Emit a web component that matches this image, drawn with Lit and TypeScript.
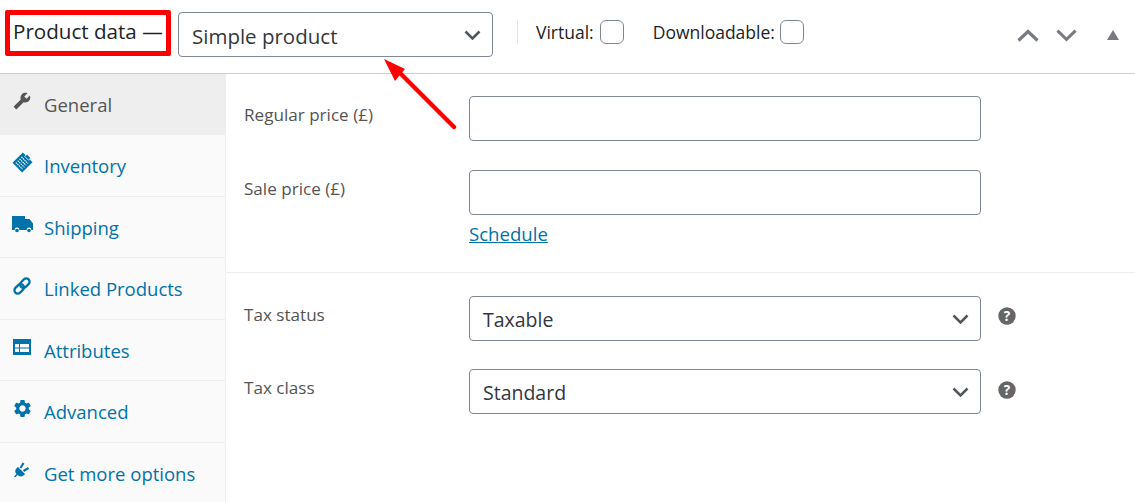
import { LitElement, html, css, svg } from "lit";
import { customElement } from "lit/decorators.js";

const icons: Record<string, unknown> = {
  wrench: svg`<svg class="ic" style="width:18px;height:18px" viewBox="0 0 24 24"><path transform="translate(24,0) scale(-1,1)" fill="currentColor" d="M22.7 19l-9.1-9.1c.9-2.3.4-5-1.5-6.9-2-2-5-2.4-7.4-1.3L9 6 6 9 1.6 4.7C.4 7.1.9 10.1 2.9 12.1c1.9 1.9 4.6 2.4 6.9 1.5l9.1 9.1c.4.4 1 .4 1.4 0l2.300-2.300c.5-.4.5-1.100.1-1.400z"/></svg>`,
  inventory: svg`<svg class="ic" style="width:21px;height:21px" viewBox="0 0 20 20"><g transform="rotate(45 10 10)"><rect x="3.500" y="3" width="13" height="14" fill="currentColor"/><path d="M5.500 7h9M5.500 9.500h9M5.500 12h9M5.500 14.500h9" stroke="#fff" stroke-width="1" stroke-dasharray="1.500 .6"/><rect x="7.500" y="1.400" width="5" height="3" fill="currentColor" stroke="#fff" stroke-width=".7"/></g></svg>`,
  truck: svg`<svg class="ic" style="width:21px;height:17px" viewBox="0 0 21 17"><path fill="currentColor" d="M0 0h13v3h4.500L21 7.500V14h-1.600a2.400 2.400 0 0 0-4.800 0H7.400a2.400 2.400 0 0 0-4.800 0H0z"/><circle cx="5" cy="14.500" r="1.800" fill="currentColor"/><circle cx="17" cy="14.500" r="1.800" fill="currentColor"/></svg>`,
  link: svg`<svg class="ic" style="width:20px;height:20px" viewBox="0 0 18 18"><g fill="none" stroke="currentColor" stroke-width="2.100" transform="rotate(-45 9 9)"><rect x="0.600" y="6" width="9.600" height="6" rx="3"/><rect x="7.800" y="6" width="9.600" height="6" rx="3"/></g></svg>`,
  attributes: svg`<svg class="ic" style="width:18px;height:16px" viewBox="0 0 18 16"><path fill="currentColor" fill-rule="evenodd" d="M0 0h18v16H0zM2 5v8h14V5z"/><path fill="currentColor" d="M2 8.500h14v1H2zM6 5h1v8H6z"/></svg>`,
  gear: svg`<svg class="ic" style="width:21px;height:21px" viewBox="0 0 24 24"><path fill="currentColor" d="M19.14 12.94c.04-.3.06-.61.06-.94 0-.32-.02-.64-.07-.94l2.03-1.58c.18-.14.23-.41.12-.61l-1.92-3.32c-.12-.22-.37-.29-.59-.22l-2.39.96c-.5-.38-1.03-.7-1.62-.94l-.36-2.54c-.04-.24-.24-.41-.48-.41h-3.84c-.24 0-.43.17-.47.41l-.36 2.54c-.59.24-1.13.57-1.62.94l-2.39-.96c-.22-.08-.47 0-.59.22L2.74 8.87c-.12.21-.08.47.12.61l2.03 1.58c-.05.3-.09.63-.09.94s.02.64.07.94l-2.03 1.58c-.18.14-.23.41-.12.61l1.92 3.32c.12.22.37.29.59.22l2.39-.96c.5.38 1.03.7 1.62.94l.36 2.54c.05.24.24.41.48.41h3.84c.24 0 .44-.17.47-.41l.36-2.54c.59-.24 1.13-.56 1.62-.94l2.39.96c.22.08.47 0 .59-.22l1.92-3.32c.12-.22.07-.47-.12-.61l-2.01-1.58zM12 15.600c-1.980 0-3.600-1.620-3.600-3.600s1.620-3.600 3.600-3.600 3.600 1.620 3.600 3.600-1.620 3.600-3.600 3.600z"/></svg>`,
  plug: svg`<svg class="ic plug" style="width:16px;height:16px" viewBox="0 0 16 16"><path fill="currentColor" d="M4 5l7 7C9 15 5.500 15 3.500 13L1 15.500 0 14.500 2.500 12C.5 10 1 7 4 5z"/><path stroke="currentColor" stroke-width="2.200" d="M6.500 6l3-5M9.500 9l5-3"/></svg>`,
};

const tabs = [
  ["General", "wrench"],
  ["Inventory", "inventory"],
  ["Shipping", "truck"],
  ["Linked Products", "link"],
  ["Attributes", "attributes"],
  ["Advanced", "gear"],
  ["Get more options", "plug"],
];

const chevron = svg`<svg class="chev" viewBox="0 0 17 10"><path d="M1.500 1.500l7 7 7-7" fill="none" stroke="#50575e" stroke-width="2.500"/></svg>`;
const help = (cls = "") => svg`<svg class="help ${cls}" viewBox="0 0 18 18"><circle cx="9" cy="9" r="8.700" fill="#666"/><text x="9" y="14" text-anchor="middle" fill="#fff">?</text></svg>`;

@customElement("app-root")
export class AppRoot extends LitElement {
  static styles = css`
    :host {
      display: block;
      height: 502px;
      overflow: hidden;
      position: relative;
      background: #fff;
      font-family: "Open Sans", "Noto Sans", sans-serif;
      color: #1d2327;
    }
    .head {
      height: 73px;
      border-bottom: 1px solid #ccc;
      display: flex;
      align-items: flex-start;
      padding-left: 5px;
    }
    .title {
      margin-top: 10px;
      width: 166px;
      height: 46px;
      flex: none;
      box-sizing: border-box;
      border: 5px solid #f00;
      border-radius: 2px;
      padding: 2px 0 0 3px;
      font-size: 20.600px;
      line-height: 28px;
      white-space: nowrap;
      overflow: hidden;
    }
    .select {
      box-sizing: border-box;
      border: 1px solid #7e8993;
      border-radius: 4px;
      display: flex;
      align-items: center;
      justify-content: space-between;
      height: 45px;
      padding: 0 11px 0 13px;
      color: #32373c;
      font-size: 19.500px;
      background: #fff;
    }
    .select span { padding-top: 1px; }
    .head .select {
      margin: 12px 0 0 7px;
      width: 315px;
      font-size: 20.500px;
    }
    .head .select span { padding-top: 2px; }
    .chev { width: 17px; height: 10px; }
    .sep {
      width: 1px;
      height: 24px;
      background: #e5e5e5;
      margin: 20px 18px 0 24px;
    }
    .check {
      display: flex;
      align-items: center;
      height: 24px;
      margin-top: 20px;
      font-size: 17.500px;
      white-space: nowrap;
      gap: 5px;
    }
    .check + .check { margin-left: 29px; }
    .box {
      width: 24px;
      height: 24px;
      box-sizing: border-box;
      border: 1px solid #7e8993;
      border-radius: 6px;
      background: #fff;
    }
    .box.first { margin-left: 1px; }
    .sort {
      margin-left: auto;
      margin-top: 29px;
      display: flex;
      align-items: center;
      padding-right: 16px;
    }
    .sort svg { display: block; }
    .up { width: 22px; height: 13px; }
    .down { width: 21px; height: 13px; margin-left: 17px; }
    .tri { width: 12px; height: 10px; margin-left: 30px; margin-top: -2px; }
    .body { display: flex; height: 428px; }
    .side {
      width: 225px;
      flex: none;
      background: #fafafa;
      border-right: 1px solid #eee;
    }
    .tab {
      height: 62px;
      box-sizing: border-box;
      border-bottom: 1px solid #eee;
      display: flex;
      align-items: center;
      color: #0073aa;
      font-size: 18.500px;
      white-space: nowrap;
    }
    .tab:nth-child(odd) { height: 61px; }
    .tab.active {
      background: #eee;
      color: #555;
    }
    .tabicon {
      width: 44px;
      flex: none;
      display: flex;
      justify-content: center;
      padding: 0 1px;
      box-sizing: border-box;
      margin-top: -6px;
    }
    .ic { display: block; }
    .main { flex: 1; min-width: 0; color: #555d66; }
    .group {
      display: grid;
      grid-template-columns: 225px 512px auto;
      justify-content: start;
      row-gap: 29px;
      padding: 22px 0 25px 18px;
    }
    .group + .group {
      border-top: 1px solid #eee;
      padding-top: 23px;
      row-gap: 28px;
    }
    .label {
      font-size: 17.100px;
      line-height: 26px;
      padding-top: 6px;
      color: #555;
    }
    .input {
      height: 45px;
      box-sizing: border-box;
      border: 1px solid #7e8993;
      border-radius: 4px;
      background: #fff;
    }
    .field a {
      display: block;
      color: #0073aa;
      font-size: 18.600px;
      line-height: 26px;
      margin-top: 6px;
      width: max-content;
      text-decoration: underline;
    }
    .help { width: 18px; height: 18px; display: block; margin: 11px 0 0 17px; }
    .help.low { margin-top: 12px; }
    .help text { font: 700 13.500px "Open Sans", sans-serif; }
    .arrow {
      position: absolute;
      left: 378px;
      top: 54px;
      width: 84px;
      height: 80px;
      pointer-events: none;
    }
  `;

  render() {
    return html`
      <div class="head">
        <div class="title">Product data —</div>
        <div class="select"><span>Simple product</span>${chevron}</div>
        <div class="sep"></div>
        <div class="check">Virtual:<span class="box first"></span></div>
        <div class="check">Downloadable:<span class="box"></span></div>
        <div class="sort">
          <svg class="up" viewBox="0 0 22 13"><path d="M1.500 11.500L11 2.500l9.500 9" fill="none" stroke="#787c82" stroke-width="3.200"/></svg>
          <svg class="down" viewBox="0 0 22 13"><path d="M1.500 1.500L11 10.500l9.500-9" fill="none" stroke="#787c82" stroke-width="3.200"/></svg>
          <svg class="tri" viewBox="0 0 12 10"><path d="M6 0l6 10H0z" fill="#787c82"/></svg>
        </div>
      </div>
      <div class="body">
        <nav class="side">
          ${tabs.map(
            ([name, icon], i) => html`
              <div class="tab ${i === 0 ? "active" : ""}">
                <span class="tabicon">${icons[icon]}</span>${name}
              </div>
            `
          )}
        </nav>
        <div class="main">
          <div class="group">
            <div class="label">Regular price (£)</div>
            <div class="field"><div class="input"></div></div>
            <div></div>
            <div class="label">Sale price (£)</div>
            <div class="field">
              <div class="input"></div>
              <a href="#">Schedule</a>
            </div>
            <div></div>
          </div>
          <div class="group">
            <div class="label">Tax status</div>
            <div class="select"><span>Taxable</span>${chevron}</div>
            ${help()}
            <div class="label">Tax class</div>
            <div class="select"><span>Standard</span>${chevron}</div>
            ${help("low")}
          </div>
        </div>
      </div>
      <svg class="arrow" viewBox="0 0 84 80">
        <path d="M76 73L21 18" stroke="#f00" stroke-width="4.500" stroke-linecap="round" fill="none"/>
        <path d="M6 5l21 10-10 12z" fill="#f00"/>
      </svg>
    `;
  }
}
